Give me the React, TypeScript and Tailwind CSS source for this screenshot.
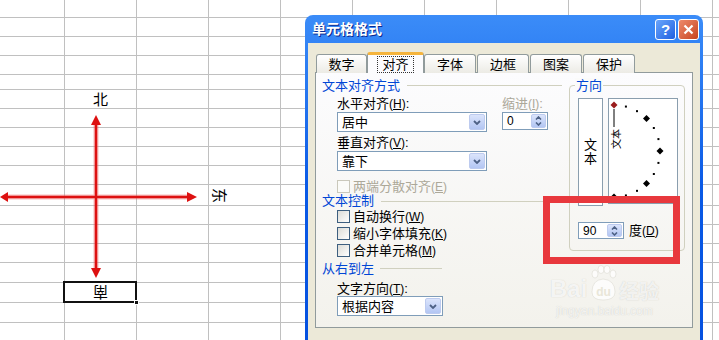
import React from 'react';

// spreadsheet row heights (px, border included)
const ROWS = [
  'h-[18px]', 'h-[19px]', 'h-[19px]', 'h-[19px]', 'h-[15px]', 'h-[19px]',
  'h-[19px]', 'h-[19px]', 'h-[19px]', 'h-[19px]', 'h-[21px]', 'h-[19px]',
  'h-[19px]', 'h-[19px]', 'h-[20px]', 'h-[20px]', 'h-[20px]', 'h-[19px]',
];
const COLS = 11;

const font = "font-['Liberation_Sans','Noto_Sans_CJK_SC',sans-serif]";

const Key: React.FC<{ k: string }> = ({ k }) => (
  <span className="text-[12px]">
    (<span className="underline">{k}</span>)
  </span>
);

const Cell: React.FC<{ row: number; col: number }> = ({ row, col }) => {
  const w = col === 0 ? 'w-[65px]' : 'w-[72px]';
  if (row === 5 && col === 1) {
    return (
      <div className={`${w} shrink-0 border-r border-[#c0c0c0] flex items-center justify-center text-[15px] leading-none`}>
        北
      </div>
    );
  }
  if (row === 10 && col === 3) {
    return (
      <div className={`${w} shrink-0 border-r border-[#c0c0c0] flex items-center pl-[3px] text-[15px] leading-none`}>
        <span className="rotate-90 inline-block">东</span>
      </div>
    );
  }
  if (row === 15 && col === 1) {
    return (
      <div className={`${w} shrink-0 border-r border-[#c0c0c0] relative flex items-center justify-center text-[15px] leading-none`}>
        <span className="rotate-180 inline-block">南</span>
        <div className="absolute -left-[2px] -top-[2px] -right-[1px] -bottom-[1px] border-2 border-[#111]" />
        <div className="absolute -right-[3px] -bottom-[3px] w-[5px] h-[5px] bg-[#111] border border-white" />
      </div>
    );
  }
  return <div className={`${w} shrink-0 border-r border-[#c0c0c0]`} />;
};

const Sheet: React.FC = () => (
  <div className="relative w-[719px] h-[340px] bg-white overflow-hidden">
    {ROWS.map((h, r) => (
      <div key={r} className={`${h} flex border-b border-[#c0c0c0]`}>
        {Array.from({ length: COLS }).map((_, c) => (
          <Cell key={c} row={r} col={c} />
        ))}
      </div>
    ))}
    <svg className="absolute left-0 top-0" width="300" height="340">
      <g stroke="#f07070" strokeWidth="5" opacity="0.45">
        <line x1="96" y1="122" x2="96" y2="271" />
        <line x1="4" y1="197" x2="190" y2="197" />
      </g>
      <g stroke="#dd1111" strokeWidth="2.5">
        <line x1="96" y1="122" x2="96" y2="271" />
        <line x1="4" y1="197" x2="190" y2="197" />
      </g>
      <g fill="#dd1111">
        <polygon points="96,115 91,125 101,125" />
        <polygon points="96,278 91,268 101,268" />
        <polygon points="197,197 187,192 187,202" />
        <polygon points="0,197 8,192 8,202" />
      </g>
    </svg>
  </div>
);

const DropBtn: React.FC = () => (
  <div className="w-[16px] h-[16px] rounded-[2px] border border-[#bdcbef] bg-gradient-to-b from-[#dbe4fb] to-[#b3c6f3] flex items-center justify-center">
    <svg width="8" height="5" viewBox="0 0 8 5">
      <path d="M1 1 L4 4 L7 1" fill="none" stroke="#4d6185" strokeWidth="1.8" />
    </svg>
  </div>
);

const Select: React.FC<{ value: string; w: string }> = ({ value, w }) => (
  <div className={`${w} h-[20px] border border-[#7f9db9] bg-white flex items-center justify-between pl-[4px] pr-[1px]`}>
    <span className="text-[13px] leading-none">{value}</span>
    <DropBtn />
  </div>
);

const Spin: React.FC<{ value: string; h: string }> = ({ value, h }) => (
  <div className={`w-[46px] ${h} border border-[#7f9db9] bg-white flex items-center justify-between pl-[4px] pr-[1px]`}>
    <span className="text-[12px] leading-none">{value}</span>
    <div className="w-[15px] h-[calc(100%-2px)] rounded-[2px] border border-[#bdcbef] bg-gradient-to-b from-[#dbe4fb] to-[#b3c6f3] flex flex-col items-center justify-center gap-[2px]">
      <svg width="7" height="4" viewBox="0 0 7 4">
        <path d="M1 3.5 L3.5 1 L6 3.5" fill="none" stroke="#4d6185" strokeWidth="1.6" />
      </svg>
      <svg width="7" height="4" viewBox="0 0 7 4">
        <path d="M1 0.5 L3.5 3 L6 0.5" fill="none" stroke="#4d6185" strokeWidth="1.6" />
      </svg>
    </div>
  </div>
);

const Check: React.FC<{ label: React.ReactNode; disabled?: boolean }> = ({ label, disabled }) => (
  <div className="flex items-center h-full">
    <div
      className={
        disabled
          ? 'w-[13px] h-[13px] border border-[#cac8bb] bg-[#fbfbf8]'
          : 'w-[13px] h-[13px] border border-[#3d5f80] bg-gradient-to-br from-[#dcdcd7] to-white'
      }
    />
    <span className={disabled ? 'ml-[3px] text-[13px] leading-none text-[#aca899]' : 'ml-[3px] text-[13px] leading-none'}>
      {label}
    </span>
  </div>
);

const GroupLabel: React.FC<{ label: string; h: string; line: string }> = ({ label, h, line }) => (
  <div className={`flex items-center ${h}`}>
    <span className="text-[13px] leading-none text-[#0046d5]">{label}</span>
    <div className={line} />
  </div>
);

const Dial: React.FC = () => {
  const cx = 5;
  const cy = 52;
  const r = 46;
  const marks = [] as React.ReactNode[];
  for (let a = 90; a >= -90; a -= 15) {
    const rad = (a * Math.PI) / 180;
    const x = cx + r * Math.cos(rad);
    const y = cy - r * Math.sin(rad);
    if (a % 45 === 0) {
      marks.push(
        <polygon
          key={a}
          points={`${x},${y - 3.5} ${x + 3.5},${y} ${x},${y + 3.5} ${x - 3.5},${y}`}
          fill={a === 90 ? '#9a1c1c' : '#000'}
        />
      );
    } else {
      marks.push(<rect key={a} x={x - 1} y={y - 1} width="2" height="2" fill="#000" />);
    }
  }
  return (
    <svg width="68" height="104">
      {marks}
      <line x1={cx} y1="10" x2={cx} y2="28" stroke="#000" strokeWidth="1" />
      <text
        x="6.5"
        y="40"
        fontSize="10"
        fontFamily="Noto Sans CJK SC, sans-serif"
        textAnchor="middle"
        dominantBaseline="central"
        transform="rotate(-90 6.5 40)"
      >
        文本
      </text>
    </svg>
  );
};

const Tab: React.FC<{ label: string; selected?: boolean; w: string; ml?: string }> = ({ label, selected, w, ml }) =>
  selected ? (
    <div className={`${w} h-[21px] rounded-t-[3px] border-x border-[#919b9c] border-t-[3px] border-t-[#f5b43c] bg-[#fcfcfe] flex items-center justify-center relative z-10`}>
      <span className="text-[13px] leading-none px-[4px] py-[1px] border border-dotted border-[#333]">{label}</span>
    </div>
  ) : (
    <div className={`${w} ${ml ?? ''} h-[19px] rounded-t-[3px] border border-b-0 border-[#919b9c] bg-gradient-to-b from-white to-[#ecebe5] flex items-center justify-center`}>
      <span className="text-[13px] leading-none">{label}</span>
    </div>
  );

const Dialog: React.FC = () => (
  <div className={`absolute left-[305px] top-[15px] w-[398px] h-[340px] rounded-t-[8px] bg-gradient-to-b from-[#3b8cf8] via-[#0a5ae6] to-[#0550df] flex flex-col ${font}`}>
    <div className="h-[28px] flex items-center justify-between pl-[7px] pr-[4px]">
      <span className="text-white text-[14px] font-bold leading-none [text-shadow:1px_1px_0_#0a2a90]">单元格格式</span>
      <div className="flex gap-[2px]">
        <div className="w-[21px] h-[21px] rounded-[3px] border border-white bg-gradient-to-br from-[#6aa5fb] to-[#1f5fe0] flex items-center justify-center text-white text-[15px] font-bold leading-none">
          ?
        </div>
        <div className="w-[21px] h-[21px] rounded-[3px] border border-white bg-gradient-to-br from-[#ed8a6b] to-[#c7421c] flex items-center justify-center">
          <svg width="11" height="11" viewBox="0 0 11 11">
            <path d="M1.5 1.5 L9.5 9.5 M9.5 1.5 L1.5 9.5" stroke="#fff" strokeWidth="2.2" />
          </svg>
        </div>
      </div>
    </div>
    <div className="mx-[3px] flex-1 bg-[#ece9d8] px-[7px] pt-[9px]">
      <div className="flex items-end pl-[1px] -mb-[1px]">
        <Tab label="数字" w="w-[51px]" />
        <Tab label="对齐" w="w-[57px]" selected />
        <Tab label="字体" w="w-[52px]" />
        <Tab label="边框" w="w-[52px]" ml="ml-[1px]" />
        <Tab label="图案" w="w-[52px]" ml="ml-[1px]" />
        <Tab label="保护" w="w-[52px]" ml="ml-[1px]" />
      </div>
      <div className="h-[256px] border border-[#919b9c] bg-gradient-to-b from-[#fcfcfe] to-[#f3f2ec] flex pt-[4px] pl-[6px]">
        <div className="w-[240px] flex flex-col">
          <GroupLabel label="文本对齐方式" h="h-[16px]" line="flex-1 ml-[7px] border-t border-[#d0d0bf]" />
          <div className="pl-[15px] flex flex-col">
            <div className="mt-[2px] h-[16px] flex items-center text-[13px] leading-none">
              <span className="w-[165px]">
                水平对齐<Key k="H" />:
              </span>
              <span className="text-[#aca899]">
                缩进<Key k="I" />:
              </span>
            </div>
            <div className="mt-[1px] h-[20px] flex items-start">
              <Select value="居中" w="w-[150px]" />
              <div className="ml-[15px]">
                <Spin value="0" h="h-[18px]" />
              </div>
            </div>
            <div className="mt-[2px] h-[16px] flex items-center text-[13px] leading-none">
              <span>
                垂直对齐<Key k="V" />:
              </span>
            </div>
            <div className="mt-[1px] h-[20px] flex">
              <Select value="靠下" w="w-[150px]" />
            </div>
            <div className="mt-[8px] h-[14px]">
              <Check disabled label={<>两端分散对齐<Key k="E" /></>} />
            </div>
          </div>
          <GroupLabel label="文本控制" h="h-[14px]" line="flex-1 ml-[7px] mt-[2px] border-t border-[#d0d0bf]" />
          <div className="pl-[15px] flex flex-col">
            <div className="mt-[1px] h-[16px]">
              <Check label={<>自动换行<Key k="W" /></>} />
            </div>
            <div className="mt-[1px] h-[16px]">
              <Check label={<>缩小字体填充<Key k="K" /></>} />
            </div>
            <div className="mt-[1px] h-[16px]">
              <Check label={<>合并单元格<Key k="M" /></>} />
            </div>
          </div>
          <div className="mt-[2px]">
            <GroupLabel label="从右到左" h="h-[16px]" line="w-[62px] ml-[6px] border-t border-[#d0d0bf]" />
          </div>
          <div className="pl-[15px] flex flex-col">
            <div className="mt-[4px] h-[16px] flex items-center text-[13px] leading-none">
              <span>
                文字方向<Key k="T" />:
              </span>
            </div>
            <Select value="根据内容" w="w-[106px]" />
          </div>
        </div>
        <div className="ml-[7px] mt-[8px] w-[116px] h-[166px] rounded-[4px] border border-[#d0d0bf] relative pt-[12px] pl-[8px] flex flex-col">
          <span className="absolute -top-[8px] left-[5px] px-[1px] bg-[#fbfbfa] text-[13px] leading-[16px] text-[#0046d5]">
            方向
          </span>
          <div className="flex items-start">
            <div className="w-[25px] h-[108px] border border-[#8a9eae] bg-white flex flex-col items-center justify-center text-[13px] leading-[14px]">
              <span>文</span>
              <span>本</span>
            </div>
            <div className="ml-[5px] w-[70px] h-[106px] border border-[#8a9eae] bg-white">
              <Dial />
            </div>
          </div>
          <div className="mt-[16px] flex items-center">
            <Spin value="90" h="h-[17px]" />
            <span className="ml-[5px] text-[13px] leading-none">
              度<Key k="D" />
            </span>
          </div>
        </div>
      </div>
    </div>
  </div>
);

const Watermark: React.FC = () => (
  <div className="absolute left-[550px] top-[263px] flex flex-col items-center pointer-events-none">
    <div className="flex items-end h-[38px]">
      <span className="text-[24px] font-bold leading-none text-white/80 [text-shadow:0_0_1px_rgba(120,120,110,0.35)] font-['Liberation_Sans',sans-serif]">
        Bai
      </span>
      <svg width="30" height="36" viewBox="0 0 30 36" className="mx-[1px]">
        <g fill="#ffffff" fillOpacity="0.75" stroke="#d8d6cc" strokeOpacity="0.5">
          <ellipse cx="7" cy="9" rx="3" ry="4" />
          <ellipse cx="13" cy="4.5" rx="3" ry="4" />
          <ellipse cx="19" cy="4.5" rx="3" ry="4" />
          <ellipse cx="25" cy="9" rx="3" ry="4" />
          <path d="M4 27 Q4 15 15 14 Q27 15 27 27 Q27 35 15 35 Q4 35 4 27 Z" />
        </g>
        <text x="15.5" y="31" fontSize="12" fontWeight="bold" textAnchor="middle" fill="#e9e6d8" fontFamily="Liberation Sans, sans-serif">
          du
        </text>
      </svg>
      <span className="text-[20px] font-bold leading-none text-white/75 [text-shadow:0_0_1px_rgba(120,120,110,0.35)] font-['Noto_Sans_CJK_SC',sans-serif]">
        经验
      </span>
    </div>
    <span className="mt-[4px] text-[12px] leading-none text-white/75 [text-shadow:0_0_1px_rgba(120,120,110,0.35)] font-['Liberation_Sans',sans-serif]">
      jingyan.baidu.com
    </span>
  </div>
);

const App: React.FC = () => (
  <div className={`relative w-[719px] h-[340px] overflow-hidden ${font}`}>
    <Sheet />
    <Dialog />
    <div className="absolute left-[543px] top-[196px] w-[137px] h-[68px] border-[7px] border-[#e8383d]" />
    <Watermark />
  </div>
);

export default App;
